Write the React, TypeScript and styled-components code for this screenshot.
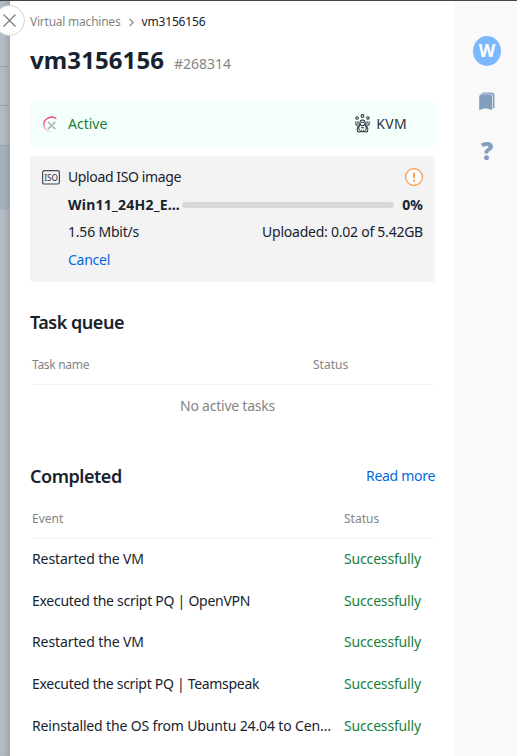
import React from "react";
import styled, { createGlobalStyle } from "styled-components";

const GlobalStyle = createGlobalStyle`
  * { box-sizing: border-box; }
  body {
    margin: 0;
    overflow: hidden;
    background: #fff;
    color: #17222e;
    font: 400 14px/20px "Noto Sans", "Open Sans", sans-serif;
  }
  h1, h2, p { margin: 0; }
  svg { display: block; flex: none; }
`;

const Shell = styled.div`
  position: relative;
  display: grid;
  grid-template-columns: 10px 445px 62px;
  width: 517px;
  height: 756px;
  overflow: hidden;
  border-top: 1px solid #454448;
`;

const Backdrop = styled.div`
  display: flex;
  flex-direction: column;
  background: #b5bdc5;
  box-shadow: inset -7px 0 7px -5px rgba(60, 75, 90, 0.28);
`;

const BackdropBand = styled.div<{ $height: number; $shaded?: boolean }>`
  height: ${(p) => p.$height}px;
  border-bottom: 1px solid ${(p) => (p.$shaded ? "transparent" : "#969fa7")};
  background: ${(p) => (p.$shaded ? "rgba(120, 135, 148, 0.22)" : "transparent")};
`;

const Panel = styled.main`
  display: flex;
  flex-direction: column;
  padding: 11px 20px 0;
  background: #fff;
`;

const CloseButton = styled.button`
  position: absolute;
  top: 4px;
  left: -6px;
  display: grid;
  place-items: center;
  width: 31px;
  height: 31px;
  padding: 0;
  border: 1px solid #d5d5d5;
  border-radius: 50%;
  background: #fff;
`;

const Label = styled.span<{ $spacing?: number }>`
  letter-spacing: ${(p) => p.$spacing ?? 0}px;
  white-space: nowrap;
`;

const Breadcrumbs = styled.nav`
  display: flex;
  align-items: center;
  height: 20px;
  color: #858585;
  font-size: 12px;
  svg { margin: 0 7px 0 9px; }
`;

const Current = styled(Label)`
  color: #17222e;
`;

const TitleRow = styled.header`
  display: flex;
  align-items: baseline;
  gap: 10px;
  height: 36px;
  margin-top: 10px;
`;

const Title = styled.h1`
  font-size: 24px;
  font-weight: 700;
  line-height: 36px;
  letter-spacing: 0.1px;
`;

const MachineId = styled(Label)`
  color: #858585;
`;

const StatusCard = styled.section`
  display: flex;
  align-items: center;
  height: 44px;
  margin-top: 24px;
  padding: 0 28px 1px 12px;
  border-radius: 4px;
  background: #f4fefa;
  color: #17813b;
`;

const Platform = styled.div`
  display: flex;
  align-items: center;
  gap: 6px;
  margin-left: auto;
  color: #29333e;
`;

const IconSlot = styled.div`
  width: 26px;
  flex: none;
`;

const UploadCard = styled.section`
  height: 126px;
  margin-top: 10px;
  padding: 11px 12px;
  border-radius: 4px;
  background: #f3f3f3;
`;

const UploadHead = styled.div`
  display: flex;
  align-items: center;
  height: 20px;
  & > :last-child { margin-left: auto; }
`;

const UploadBody = styled.div`
  display: grid;
  gap: 7px;
  margin: 8px 0 0 26px;
`;

const UploadLine = styled.div<{ $strong?: boolean }>`
  display: flex;
  align-items: center;
  justify-content: space-between;
  height: 20px;
  font-weight: ${(p) => (p.$strong ? 700 : 400)};
`;

const CancelLine = styled(UploadLine)`
  margin-top: 1px;
`;

const Track = styled.div`
  flex: 1;
  height: 6px;
  margin: 0 8px 0 2px;
  border-radius: 3px;
  background: #d8d8d8;
`;

const Link = styled(Label)`
  color: #0468e0;
`;

const SectionHead = styled.div<{ $top: number }>`
  display: flex;
  align-items: center;
  justify-content: space-between;
  height: 26px;
  margin-top: ${(p) => p.$top}px;
`;

const Heading = styled.h2<{ $spacing: number }>`
  font-size: 18px;
  font-weight: 600;
  line-height: 26px;
  letter-spacing: ${(p) => p.$spacing}px;
`;

const TableHead = styled.div<{ $second: number }>`
  display: grid;
  grid-template-columns: ${(p) => p.$second}px 1fr;
  align-items: center;
  height: 42px;
  margin: 8px 2px 0;
  padding-top: 2px;
  border-bottom: 1px solid #f4f4f4;
  color: #858585;
  font-size: 12px;
`;

const EmptyRow = styled.p`
  height: 42px;
  margin-left: -10px;
  color: #858585;
  line-height: 42px;
  text-align: center;
`;

const EventList = styled.div`
  margin: -1px 2px 0;
`;

const EventRow = styled.div`
  display: grid;
  grid-template-columns: 312px 1fr;
  align-items: center;
  height: 41.75px;
`;

const Success = styled(Label)`
  color: #17813b;
`;

const Sidebar = styled.aside`
  display: flex;
  flex-direction: column;
  align-items: center;
  padding: 35px 0 0 2px;
  background: #f9f9f9;
  color: #7f9fbd;
`;

const Avatar = styled.div`
  display: grid;
  place-items: center;
  width: 28px;
  height: 30px;
  border-radius: 50%;
  background: #7cb8ff;
  color: #fff;
  font-size: 17px;
  font-weight: 700;
`;

const SideIcon = styled.div`
  display: grid;
  place-items: center;
  height: 20px;
  margin-top: 25px;
`;

const HelpMark = styled.div`
  margin-top: 24px;
  height: 30px;
  font: 800 24px/32px "Open Sans", sans-serif;
`;

const CloseIcon = () => (
  <svg width="13" height="13" viewBox="0 0 13 13" stroke="#777" strokeWidth="1.1">
    <path d="M.5.5l12 12M12.5.5l-12 12" />
  </svg>
);

const Chevron = () => (
  <svg width="5" height="9" viewBox="0 0 5 9" fill="none" stroke="#858585" strokeWidth="1.2">
    <path d="M.6.8 4.2 4.5.6 8.2" />
  </svg>
);

const SpinnerIcon = () => (
  <svg width="19" height="18" viewBox="0 0 19 18" fill="none">
    <defs>
      <linearGradient id="spin" x1="0" y1="0" x2="0" y2="1">
        <stop offset="0" stopColor="#e8447b" />
        <stop offset=".5" stopColor="#ee7c9f" />
        <stop offset="1" stopColor="#f3b4c7" stopOpacity=".35" />
      </linearGradient>
    </defs>
    <path d="M14.3 3.6C10.5.9 5.8 2 3.2 5.3.5 9 1.7 15.4 8.8 17.2" stroke="url(#spin)" strokeWidth="1.5" />
    <path d="M5.9 6.9l7.4 7.2M13.3 6.9l-7.4 7.2" stroke="#b5bab8" strokeWidth="1.7" />
  </svg>
);

const IsoText = styled.text`
  font: 500 9px "Noto Sans", sans-serif;
`;

const IsoIcon = () => (
  <svg width="18" height="16" viewBox="0 0 18 16" fill="none">
    <rect x=".6" y="1.6" width="16.8" height="13.4" rx="1.8" stroke="#434a52" strokeWidth="1.2" />
    <IsoText x="2.2" y="11.6" textLength="13.8" lengthAdjust="spacingAndGlyphs" fill="#434a52">ISO</IsoText>
  </svg>
);

const KvmIcon = () => (
  <svg width="15" height="19" viewBox="0 0 15 19" fill="none" stroke="#29333e" strokeWidth="1.05">
    <circle cx="7.5" cy="2" r="1.4" />
    <circle cx="2.1" cy="4" r="1.3" />
    <circle cx="12.9" cy="4" r="1.3" />
    <ellipse cx="7.5" cy="8.8" rx="2.6" ry="2.9" />
    <path d="M.9 7.4v3.1l2.7 2.2M14.1 7.4v3.1l-2.7 2.2M2.8 7.3l.3 2.4 1.8.9M12.2 7.3l-.3 2.4-1.8.9M4.7 10.8c-1.2 2-1.2 3.9-.2 5.6M10.3 10.8c1.2 2 1.2 3.9.2 5.6M5.8 8.2h3.4" />
    <path d="M3.7 13.1c-2.1.5-2.2 4.6.1 4.8 1.8.1 2.6-.9 2.8-2.1M11.3 13.1c2.1.5 2.2 4.6-.1 4.8-1.8.1-2.6-.9-2.8-2.1M6 13.8h3M6.2 17.7h2.6" />
  </svg>
);

const AlertIcon = () => (
  <svg width="18" height="18" viewBox="0 0 18 18" fill="none">
    <circle cx="9" cy="9" r="8.4" fill="#fff" stroke="#fb943b" strokeWidth="1.2" />
    <path d="M9 4.4v5.8M9 11.8v2" stroke="#fb943b" strokeWidth="1.7" />
  </svg>
);

const BookmarksIcon = () => (
  <svg width="16" height="19" viewBox="0 0 16 19" fill="#7f9fbd">
    <path d="M2.4 1.8Q3.4.4 5 .4h7.6q2.8 0 2.8 2.8v13.4l-1.5-.6V5q0-3.2-3.1-3.2Z" />
    <path d="M.2 5q0-2.7 2.7-2.7h7.6q2.7 0 2.7 2.7v13L6.7 16.2.2 18Z" />
  </svg>
);

const events = [
  { name: "Restarted the VM", spacing: -0.1 },
  { name: "Executed the script PQ | OpenVPN", spacing: -0.27 },
  { name: "Restarted the VM", spacing: -0.1 },
  { name: "Executed the script PQ | Teamspeak", spacing: -0.3 },
  { name: "Reinstalled the OS from Ubuntu 24.04 to Cen…", spacing: -0.15 },
];

export default function App() {
  return (
    <>
      <GlobalStyle />
      <Shell>
        <Backdrop>
          <BackdropBand $height={66} />
          <BackdropBand $height={39} />
          <BackdropBand $height={40} />
          <BackdropBand $height={64} $shaded />
        </Backdrop>
        <Panel>
          <Breadcrumbs>
            <Label $spacing={-0.23}>Virtual machines</Label>
            <Chevron />
            <Current $spacing={-0.15}>vm3156156</Current>
          </Breadcrumbs>
          <TitleRow>
            <Title>vm3156156</Title>
            <MachineId $spacing={-0.05}>#268314</MachineId>
          </TitleRow>
          <StatusCard>
            <IconSlot><SpinnerIcon /></IconSlot>
            <Label>Active</Label>
            <Platform>
              <KvmIcon />
              <Label $spacing={0.3}>KVM</Label>
            </Platform>
          </StatusCard>
          <UploadCard>
            <UploadHead>
              <IconSlot><IsoIcon /></IconSlot>
              <Label $spacing={-0.38}>Upload ISO image</Label>
              <AlertIcon />
            </UploadHead>
            <UploadBody>
              <UploadLine $strong>
                <Label $spacing={0.24}>Win11_24H2_E…</Label>
                <Track />
                <Label>0%</Label>
              </UploadLine>
              <UploadLine>
                <Label $spacing={-0.2}>1.56 Mbit/s</Label>
                <Label $spacing={-0.24}>Uploaded: 0.02 of 5.42GB</Label>
              </UploadLine>
              <CancelLine>
                <Link $spacing={-0.26}>Cancel</Link>
              </CancelLine>
            </UploadBody>
          </UploadCard>
          <SectionHead $top={27}>
            <Heading $spacing={-0.48}>Task queue</Heading>
          </SectionHead>
          <TableHead $second={281}>
            <Label $spacing={-0.3}>Task name</Label>
            <Label>Status</Label>
          </TableHead>
          <EmptyRow>
            <Label $spacing={-0.23}>No active tasks</Label>
          </EmptyRow>
          <SectionHead $top={36}>
            <Heading $spacing={-0.46}>Completed</Heading>
            <Link $spacing={-0.3}>Read more</Link>
          </SectionHead>
          <TableHead $second={312}>
            <Label>Event</Label>
            <Label>Status</Label>
          </TableHead>
          <EventList>
            {events.map((event, index) => (
              <EventRow key={index}>
                <Label $spacing={event.spacing}>{event.name}</Label>
                <Success $spacing={-0.16}>Successfully</Success>
              </EventRow>
            ))}
          </EventList>
        </Panel>
        <Sidebar>
          <Avatar>W</Avatar>
          <SideIcon><BookmarksIcon /></SideIcon>
          <HelpMark>?</HelpMark>
        </Sidebar>
        <CloseButton aria-label="Close"><CloseIcon /></CloseButton>
      </Shell>
    </>
  );
}
